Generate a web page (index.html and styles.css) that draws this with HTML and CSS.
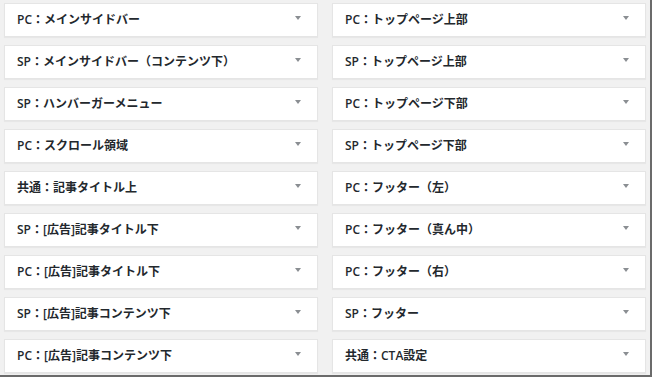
FILE: index.html
```html
<!DOCTYPE html>
<html lang="ja">
<head>
<meta charset="utf-8">
<title>Widgets</title>
<link rel="stylesheet" href="styles.css">
</head>
<body>
<div class="frame">
  <div class="areas">
    <div class="area"><h2>PC：メインサイドバー</h2><span class="toggle"></span></div>
    <div class="area"><h2>PC：トップページ上部</h2><span class="toggle"></span></div>
    <div class="area"><h2>SP：メインサイドバー（コンテンツ下）</h2><span class="toggle"></span></div>
    <div class="area"><h2>SP：トップページ上部</h2><span class="toggle"></span></div>
    <div class="area"><h2>SP：ハンバーガーメニュー</h2><span class="toggle"></span></div>
    <div class="area"><h2>PC：トップページ下部</h2><span class="toggle"></span></div>
    <div class="area"><h2>PC：スクロール領域</h2><span class="toggle"></span></div>
    <div class="area"><h2>SP：トップページ下部</h2><span class="toggle"></span></div>
    <div class="area"><h2>共通：記事タイトル上</h2><span class="toggle"></span></div>
    <div class="area"><h2>PC：フッター（左）</h2><span class="toggle"></span></div>
    <div class="area"><h2>SP：[広告]記事タイトル下</h2><span class="toggle"></span></div>
    <div class="area"><h2>PC：フッター（真ん中）</h2><span class="toggle"></span></div>
    <div class="area"><h2>PC：[広告]記事タイトル下</h2><span class="toggle"></span></div>
    <div class="area"><h2>PC：フッター（右）</h2><span class="toggle"></span></div>
    <div class="area"><h2>SP：[広告]記事コンテンツ下</h2><span class="toggle"></span></div>
    <div class="area"><h2>SP：フッター</h2><span class="toggle"></span></div>
    <div class="area"><h2>PC：[広告]記事コンテンツ下</h2><span class="toggle"></span></div>
    <div class="area"><h2>共通：CTA設定</h2><span class="toggle"></span></div>
  </div>
</div>
</body>
</html>
```
FILE: styles.css
```css
html, body {
  margin: 0;
  padding: 0;
  background: #ffffff;
}
.frame {
  width: 650px;
  height: 375px;
  background: #f1f1f1;
  border-right: 2px solid #6b6b6b;
  border-bottom: 2px solid #6b6b6b;
  overflow: hidden;
  box-sizing: content-box;
}
.areas {
  display: grid;
  grid-template-columns: 314px 314px;
  column-gap: 14px;
  row-gap: 8px;
  padding: 3px 0 0 4px;
}
.area {
  height: 34px;
  box-sizing: border-box;
  background: #ffffff;
  border: 1px solid #e5e5e5;
  box-shadow: 0 1px 1px rgba(0, 0, 0, 0.04);
  display: flex;
  align-items: center;
  justify-content: space-between;
  padding: 0 16px 0 12px;
}
.area h2 {
  margin: 0;
  font-family: "Open Sans", "Noto Sans CJK JP", sans-serif;
  font-size: 12px;
  font-weight: 600;
  color: #23282d;
  line-height: 1;
}
.toggle {
  width: 0;
  height: 0;
  border-left: 3px solid transparent;
  border-right: 3px solid transparent;
  border-top: 4px solid #8a8e92;
  margin-top: -4px;
}
```
